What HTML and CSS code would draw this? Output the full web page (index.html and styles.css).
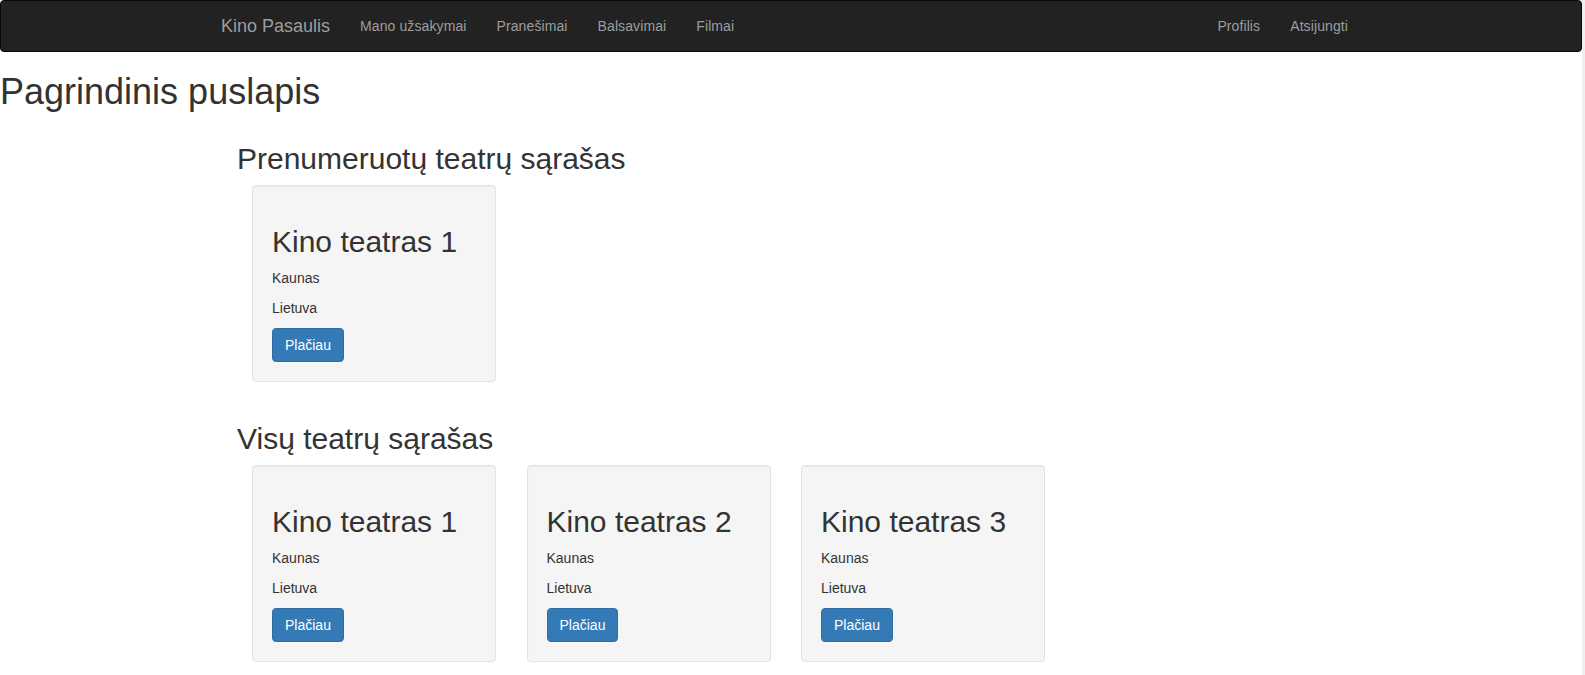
FILE: index.html
```html
<!DOCTYPE html>
<html lang="lt">
<head>
<meta charset="utf-8">
<title>Pagrindinis puslapis</title>
<link rel="stylesheet" href="styles.css">
</head>
<body>
<nav class="navbar">
  <div class="navbar-container">
    <a class="brand" href="#">Kino Pasaulis</a>
    <ul class="nav">
      <li><a href="#">Mano užsakymai</a></li>
      <li><a href="#">Pranešimai</a></li>
      <li><a href="#">Balsavimai</a></li>
      <li><a href="#">Filmai</a></li>
    </ul>
    <ul class="nav nav-right">
      <li><a href="#">Profilis</a></li>
      <li><a href="#">Atsijungti</a></li>
    </ul>
  </div>
</nav>
<h1 class="page-title">Pagrindinis puslapis</h1>
<main class="content">
  <section class="section">
    <h2 class="section-title">Prenumeruotų teatrų sąrašas</h2>
    <div class="cards">
      <div class="card">
        <h2 class="card-title">Kino teatras 1</h2>
        <p class="card-text">Kaunas</p>
        <p class="card-text">Lietuva</p>
        <div class="card-actions"><a class="btn" href="#">Plačiau</a></div>
      </div>
    </div>
  </section>
  <section class="section">
    <h2 class="section-title">Visų teatrų sąrašas</h2>
    <div class="cards">
      <div class="card">
        <h2 class="card-title">Kino teatras 1</h2>
        <p class="card-text">Kaunas</p>
        <p class="card-text">Lietuva</p>
        <div class="card-actions"><a class="btn" href="#">Plačiau</a></div>
      </div>
      <div class="card">
        <h2 class="card-title">Kino teatras 2</h2>
        <p class="card-text">Kaunas</p>
        <p class="card-text">Lietuva</p>
        <div class="card-actions"><a class="btn" href="#">Plačiau</a></div>
      </div>
      <div class="card">
        <h2 class="card-title">Kino teatras 3</h2>
        <p class="card-text">Kaunas</p>
        <p class="card-text">Lietuva</p>
        <div class="card-actions"><a class="btn" href="#">Plačiau</a></div>
      </div>
    </div>
  </section>
</main>
</body>
</html>
```
FILE: styles.css
```css
* { box-sizing: border-box; }

html {
  background: #efefef;
}

body {
  margin: 0 3px 0 0;
  min-height: 100vh;
  background: #fff;
  font-family: "Liberation Sans", Arial, Helvetica, sans-serif;
  font-size: 14px;
  line-height: 20px;
  color: #333;
}

a { text-decoration: none; }

.navbar {
  background: #222;
  border: 1px solid #080808;
  border-radius: 4px;
  min-height: 52px;
  margin-bottom: 20px;
}

.navbar-container {
  width: 1170px;
  margin: 0 auto;
  padding: 0 15px;
  display: flex;
  align-items: flex-start;
}

.brand {
  display: block;
  margin-left: -15px;
  padding: 15px;
  height: 50px;
  font-size: 18px;
  line-height: 20px;
  color: #9d9d9d;
}

.nav {
  list-style: none;
  margin: 0;
  padding: 0;
  display: flex;
}

.nav a {
  display: block;
  padding: 15px;
  line-height: 20px;
  font-size: 14px;
  letter-spacing: 0.1px;
  color: #9d9d9d;
}

.nav-right {
  margin-left: auto;
  margin-right: -2px;
}

.page-title {
  margin: 20px 0 30px;
  font-size: 36px;
  font-weight: 500;
  line-height: 1.1;
}

.content {
  padding-left: 237px;
}

.section-title {
  margin: 20px 0 10px;
  font-size: 30px;
  font-weight: 500;
  line-height: 1.1;
}

.cards {
  display: flex;
  gap: 30.5px;
  padding-left: 15px;
}

.card {
  width: 244px;
  margin-bottom: 20px;
  padding: 19px;
  background: #f5f5f5;
  border: 1px solid #e3e3e3;
  border-radius: 4px;
  box-shadow: inset 0 1px 1px rgba(0, 0, 0, 0.05);
}

.card-title {
  margin: 20px 0 10px;
  font-size: 30px;
  font-weight: 500;
  line-height: 1.1;
}

.card-text {
  margin: 0 0 10px;
}

.card-actions {
  display: flex;
}

.btn {
  display: block;
  padding: 6px 12px;
  font-size: 14px;
  line-height: 20px;
  color: #fff;
  background: #337ab7;
  border: 1px solid #2e6da4;
  border-radius: 4px;
}
```
